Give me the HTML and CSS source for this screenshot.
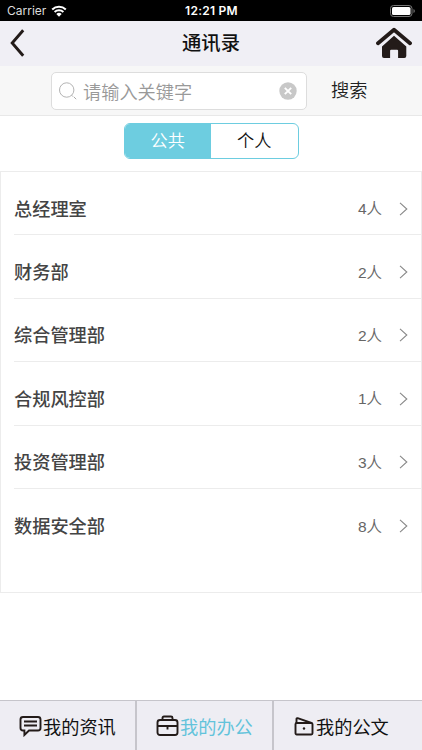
FILE: index.html
```html
<!DOCTYPE html>
<html lang="zh-CN">

<head>
    <meta charset="UTF-8">
    <meta name="viewport" content="width=device-width, initial-scale=1.0">
    <title>通讯录</title>
    <link rel="stylesheet" href="styles.css">
</head>

<body>

    <!-- Status Bar -->
    <div class="status-bar">
        <div class="carrier">
            <span>Carrier</span>
            <svg width="16" height="12" viewBox="0 0 16 12">
                <path d="M1.2 4.5a9.8 9.8 0 0 1 13.6 0M3.6 7.1a6.4 6.4 0 0 1 8.8 0" fill="none" stroke="#fff" stroke-width="2"/>
                <path d="M5.3 8.9a4 4 0 0 1 5.400 0L8 11.7z" fill="#fff"/>
            </svg>
        </div>
        <div class="time">12:21 PM</div>
        <svg class="battery" width="26" height="12" viewBox="0 0 26 12">
            <rect x=".5" y=".5" width="21.5" height="11" rx="3" fill="none" stroke="#777"/>
            <rect x="2" y="2" width="18.5" height="8" rx="1.6" fill="#fff"/>
            <path d="M23.5 4v4q1.3-.6 1.3-2t-1.3-2z" fill="#777"/>
        </svg>
    </div>

    <!-- Header -->
    <div class="header">
        <svg class="back" width="16" height="28" viewBox="0 0 16 28">
            <path d="M13.2 1.3 2.2 14l11 12.7" fill="none" stroke="#231b19" stroke-width="2.9"/>
        </svg>
        <h1>通讯录</h1>
        <svg class="home" width="36" height="32" viewBox="0 0 36 32">
            <path d="M2 16.3 18 2.7l16 13.6" fill="none" stroke="#231b19" stroke-width="3.8" stroke-linecap="round" stroke-linejoin="round"/>
            <path d="M18 8.8 30.3 19.4V29q0 2-2 2h-6.2v-7.2q0-1-1-1h-6q-1 0-1 1V31H8q-2 0-2-2v-9.6z" fill="#231b19"/>
        </svg>
    </div>

    <!-- Search -->
    <div class="search">
        <div class="search-box">
            <svg width="18" height="18" viewBox="0 0 18 18">
                <path d="M12.6 13.2 14.1 14.7M15 15l2.200 2.200" stroke="#aaa" fill="none"/>
                <circle cx="7.7" cy="8" r="7.2" fill="none" stroke="#aaa" stroke-width=".9"/>
            </svg>
            <span class="placeholder">请输入关键字</span>
            <svg class="clear" width="18" height="18" viewBox="0 0 18 18">
                <circle cx="9" cy="9" r="8.7" fill="#c8c8c8"/>
                <path d="m5.8 5.8 6.4 6.4m0-6.4-6.4 6.4" stroke="#fff" stroke-width="1.9"/>
            </svg>
        </div>
        <span class="search-button">搜索</span>
    </div>

    <!-- Public / Personal Switch -->
    <div class="switch">
        <div class="switch-item selected">公共</div>
        <div class="switch-item">个人</div>
    </div>

    <!-- Department List -->
    <div class="list">
        <div class="row">
            <span class="name">总经理室</span>
            <span class="count">4人</span>
            <svg class="arrow" width="9" height="14" viewBox="0 0 9 14"><path d="m1 .8 6.8 6.2L1 13.2"/></svg>
        </div>
        <div class="row">
            <span class="name">财务部</span>
            <span class="count">2人</span>
            <svg class="arrow" width="9" height="14" viewBox="0 0 9 14"><path d="m1 .8 6.8 6.2L1 13.2"/></svg>
        </div>
        <div class="row">
            <span class="name">综合管理部</span>
            <span class="count">2人</span>
            <svg class="arrow" width="9" height="14" viewBox="0 0 9 14"><path d="m1 .8 6.8 6.2L1 13.2"/></svg>
        </div>
        <div class="row">
            <span class="name">合规风控部</span>
            <span class="count">1人</span>
            <svg class="arrow" width="9" height="14" viewBox="0 0 9 14"><path d="m1 .8 6.8 6.2L1 13.2"/></svg>
        </div>
        <div class="row">
            <span class="name">投资管理部</span>
            <span class="count">3人</span>
            <svg class="arrow" width="9" height="14" viewBox="0 0 9 14"><path d="m1 .8 6.8 6.2L1 13.2"/></svg>
        </div>
        <div class="row">
            <span class="name">数据安全部</span>
            <span class="count">8人</span>
            <svg class="arrow" width="9" height="14" viewBox="0 0 9 14"><path d="m1 .8 6.8 6.2L1 13.2"/></svg>
        </div>
    </div>

    <!-- Bottom Tabs -->
    <div class="tab-bar">
        <div class="tab">
            <svg width="23" height="22" viewBox="0 0 23 22">
                <path d="M4 2h15q2.5 0 2.5 2.5v8.500Q21.500 15.500 19 15.500H10l-4.600 4.500V15.500H4q-2.500 0-2.500-2.500V4.500Q1.500 2 4 2z"/>
                <path d="M5 6.500h13M5 10.500h13" stroke-width="1.500"/>
            </svg>
            <span>我的资讯</span>
        </div>
        <div class="tab active">
            <svg width="23" height="22" viewBox="0 0 23 22">
                <rect x="1.500" y="5" width="20" height="15" rx="2.500"/>
                <path d="M6.500 5V3q0-1.500 1.500-1.500h7q1.500 0 1.500 1.500v2M2 11h19"/>
                <path d="M11.500 11v3.500"/>
            </svg>
            <span>我的办公</span>
        </div>
        <div class="tab">
            <svg width="21" height="22" viewBox="0 0 21 22">
                <rect x="1.500" y="8" width="17" height="11.500" rx="1.200"/>
                <path d="M2.500 8V4q0-1 1.200-.8L17.500 8"/>
                <circle cx="10" cy="13.500" r="1.200" fill="#231b19"/>
            </svg>
            <span>我的公文</span>
        </div>
    </div>

</body>

</html>
```
FILE: styles.css
```css
* {
    box-sizing: border-box;
}

body {
    display: flex;
    flex-direction: column;
    height: 750px;
    margin: 0;
    background-color: #fff;
    color: #111;
    font-family: "Liberation Sans", "Noto Sans CJK SC", sans-serif;
    overflow: hidden;
}

svg {
    display: block;
    flex: none;
}

.status-bar {
    display: grid;
    grid-template-columns: 1fr auto 1fr;
    align-items: center;
    height: 21px;
    padding: 0 6px 0 7px;
    background-color: #000;
    color: #fff;
    font-family: Inter, sans-serif;
    font-size: 12px;
}

.carrier {
    display: flex;
    align-items: center;
    gap: 5px;
    color: #ddd;
    font-size: 12px;
}

.time {
    font-weight: 600;
    letter-spacing: 0.25px;
}

.battery {
    justify-self: end;
}

.header {
    display: grid;
    grid-template-columns: 1fr auto 1fr;
    align-items: center;
    height: 45px;
    padding: 0 10px;
    background-color: #f0eff5;
}

.back {
    margin-top: -2px;
}

h1 {
    margin: 0;
    font-size: 19.3px;
    font-weight: 500;
    line-height: 28px;
}

.home {
    justify-self: end;
    margin-top: -2px;
}

.search {
    display: flex;
    align-items: center;
    height: 50px;
    padding-left: 51px;
    border-bottom: 1px solid #e8e8e8;
    background-color: #f7f7f7;
}

.search-box {
    display: flex;
    align-items: center;
    width: 256px;
    height: 38px;
    padding: 0 9px 0 7px;
    border: 1px solid #ddd;
    border-radius: 5px;
    background-color: #fff;
}

.placeholder {
    margin-left: 6px;
    color: #999;
    font-size: 18.2px;
    font-weight: 350;
}

.clear {
    margin-left: auto;
}

.search-button {
    margin: 0 0 3px 24px;
    color: #222;
    font-size: 18.2px;
    font-weight: 350;
}

.switch {
    display: flex;
    flex: none;
    width: 175px;
    height: 36px;
    margin: 7px 0 0 123.5px;
    border: 1px solid #6dcde0;
    border-radius: 6px;
    overflow: hidden;
}

.switch-item {
    flex: 1;
    font-size: 17.2px;
    font-weight: 350;
    line-height: 34px;
    text-align: center;
}

.selected {
    background-color: #6dcde0;
    color: #fff;
}

.list {
    height: 422px;
    margin-top: 12px;
    padding-left: 13px;
    border: 1px solid #ececec;
}

.row {
    display: flex;
    align-items: center;
    height: 63.4px;
    padding: 11px 13px 0 0;
    border-bottom: 1px solid #ececec;
}

.row:last-child {
    border-bottom: none;
}

.name {
    flex: 1;
    margin-bottom: 2px;
    color: #444;
    font-size: 18.2px;
    font-weight: 500;
}

.count {
    margin: 0 17px 3px 0;
    color: #666;
    font-size: 15.5px;
    font-weight: 350;
}

.arrow path {
    fill: none;
    stroke: #888;
    stroke-width: 1.1;
}

.tab-bar {
    display: grid;
    grid-template-columns: 137px 137px 1fr;
    height: 50px;
    margin-top: auto;
    border-top: 1px solid #c6c5cb;
    background-color: #eeedf3;
}

.tab {
    display: flex;
    align-items: center;
    padding: 1px 0 0 19px;
    border-right: 2px solid #c6c5cb;
    font-size: 18.2px;
    font-weight: 400;
}

.tab span {
    margin-left: 1px;
}

.tab:last-child {
    padding-left: 20px;
    border-right: none;
}

.tab path,
.tab rect {
    fill: none;
    stroke: #231b19;
    stroke-width: 1.9;
}

.active {
    color: #62c3db;
}
```
